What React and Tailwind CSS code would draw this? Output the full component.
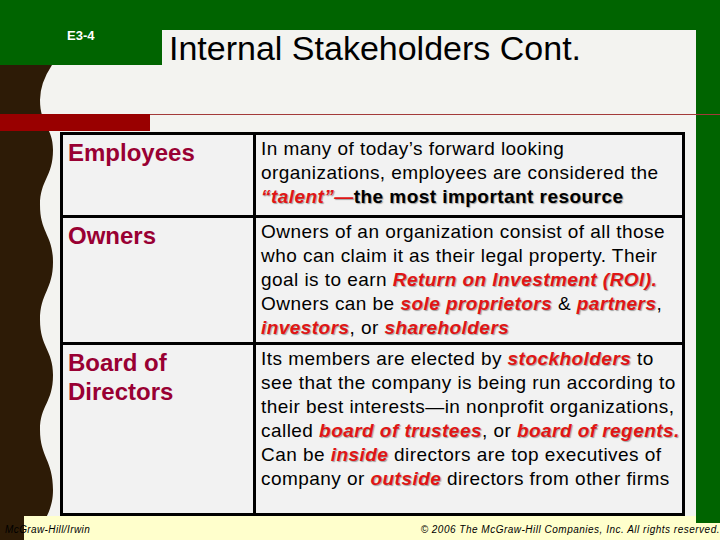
import React from "react";

const red = "font-bold italic text-[#e01515] [text-shadow:1px_1px_1px_#a0a0a0]";

function Em({ children }) {
  return <span className={red}>{children}</span>;
}

function Wave() {
  return (
    <svg width="60" height="475" viewBox="0 0 60 475" className="block">
      <path
        d="M0 0 L52 0 Q40 18 40 35 C40 60 53 62 53 85 C53 112 40 115 40 140 C40 168 53 170 53 197 C53 225 40 228 40 255 C40 282 53 285 53 310 C53 338 40 340 40 365 C40 392 53 395 53 425 C53 450 40 455 40 475 L0 475 Z"
        fill="#2d1b06"
      />
    </svg>
  );
}

const rows = [
  {
    label: ["Employees"],
    h: "h-[83px]",
    body: (
      <>
        In many of today’s forward looking organizations, employees are considered the{" "}
        <Em>“talent”—</Em>
        <span className="font-bold [text-shadow:1px_1px_1px_#a0a0a0]">the most important resource</span>
      </>
    ),
  },
  {
    label: ["Owners"],
    h: "h-[127px]",
    body: (
      <>
        Owners of an organization consist of all those who can claim it as their legal property. Their goal is to earn{" "}
        <Em>Return on Investment (ROI).</Em> Owners can be <Em>sole proprietors</Em> &amp; <Em>partners</Em>,{" "}
        <Em>investors</Em>, or <Em>shareholders</Em>
      </>
    ),
  },
  {
    label: ["Board of", "Directors"],
    h: "flex-1",
    body: (
      <>
        Its members are elected by <Em>stockholders</Em> to see that the company is being run according to their best
        interests—in nonprofit organizations, called <Em>board of trustees</Em>, or <Em>board of regents.</Em> Can be{" "}
        <Em>inside</Em> directors are top executives of company or <Em>outside</Em> directors from other firms
      </>
    ),
  },
];

export default function App() {
  return (
    <div className="w-[720px] h-[540px] flex flex-col bg-[#f3f3f0] overflow-hidden font-['Liberation_Sans',Arial,sans-serif]">
      <div className="h-[516px] flex">
        <div className="w-[696px] flex flex-col">
          {/* header */}
          <div className="h-[65px] flex">
            <div className="w-[162px] bg-[#006400] pl-[67px] pt-[23px]">
              <span className="text-[13px] font-bold text-white leading-none">E3-4</span>
            </div>
            <div className="flex-1 flex flex-col">
              <div className="h-[31px] bg-[#006400]" />
              <div className="flex-1 pl-[7px] pt-[1px] text-[34px] leading-[34px] text-black">
                Internal Stakeholders Cont.
              </div>
            </div>
          </div>
          {/* body */}
          <div className="flex-1 min-h-0 flex relative">
            <div className="w-[60px] shrink-0 h-full overflow-hidden">
              <Wave />
            </div>
            <div className="absolute left-0 top-[49px] w-[150px] h-[17px] bg-[#990000]" />
            <div className="absolute left-[150px] top-[49px] w-[570px] h-px bg-[#a33a3a] z-20" />
            <div className="flex-1 flex flex-col pt-[67px] pr-[11px]">
              <div className="flex-1 flex flex-col border-[3px] border-black bg-[#f2f2f2]">
                {rows.map((r, i) => (
                  <div
                    key={i}
                    className={`${r.h} flex ${i < rows.length - 1 ? "border-b-[3px] border-black" : ""}`}
                  >
                    <div className="w-[193px] shrink-0 border-r-[3px] border-black pl-[5px] pt-[3px] text-[24px] leading-[29px] font-bold text-[#990033]">
                      {r.label.map((l) => (
                        <div key={l}>{l}</div>
                      ))}
                    </div>
                    <div className="flex-1 pl-[5px] pr-0 pt-[2px] text-[19px] leading-[24px] tracking-[0.45px] text-black">
                      {r.body}
                    </div>
                  </div>
                ))}
              </div>
            </div>
          </div>
        </div>
        <div className="w-[24px] h-[523px] shrink-0 bg-[#006400] relative z-10" />
      </div>
      {/* footer */}
      <div className="h-[24px] flex items-center justify-between bg-[linear-gradient(to_right,#2d1b06_24px,#ffffcc_24px)] pl-[5px] pt-[2px] text-[10px] italic tracking-[0.4px] text-black">
        <span>McGraw-Hill/Irwin</span>
        <span className="tracking-[0.5px]">© 2006 The McGraw-Hill Companies, Inc. All rights reserved.</span>
      </div>
    </div>
  );
}
